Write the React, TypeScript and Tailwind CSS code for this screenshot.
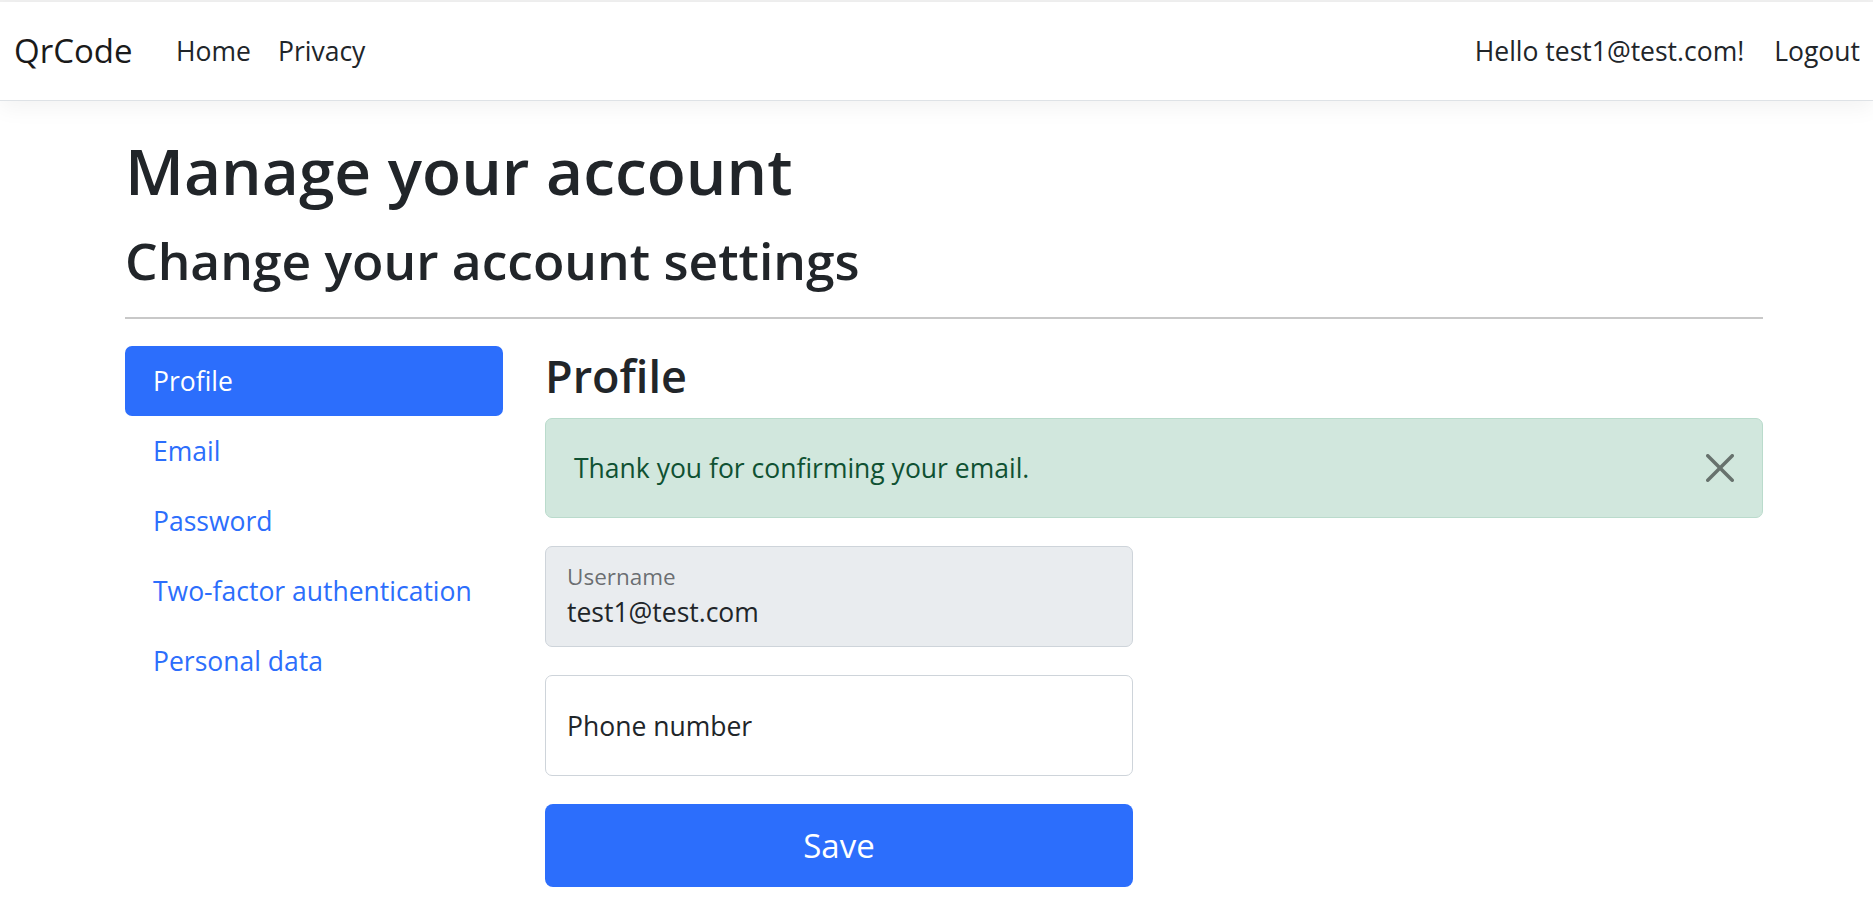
import React from "react";

function CloseIcon() {
  return (
    <svg viewBox="0 0 16 16" width="28" height="28" fill="#000" className="opacity-50">
      <path d="M.293.293a1 1 0 0 1 1.414 0L8 6.586 14.293.293a1 1 0 1 1 1.414 1.414L9.414 8l6.293 6.293a1 1 0 0 1-1.414 1.414L8 9.414l-6.293 6.293a1 1 0 0 1-1.414-1.414L6.586 8 .293 1.707a1 1 0 0 1 0-1.414z" />
    </svg>
  );
}

export default function App() {
  const links = ["Email", "Password", "Two-factor authentication", "Personal data"];
  return (
    <div className="min-h-[900px] bg-white text-[#212529] font-['Open_Sans',sans-serif]">
      <div className="h-[2px] bg-[#f0f0f0]" />
      <nav className="relative z-10 flex h-[99px] items-center border-b border-[#dee2e6] bg-white pl-[14px] pr-[13px] shadow-[0_7px_21px_rgba(0,0,0,0.05)]">
        <a className="w-[162px] whitespace-nowrap text-[33px] leading-[52px] text-[#1a1a1a]">QrCode</a>
        <a className="w-[102px] whitespace-nowrap text-[26.5px] leading-[42px]">Home</a>
        <a className="whitespace-nowrap text-[26.5px] leading-[42px]">Privacy</a>
        <div className="ml-auto flex items-center gap-[30px] whitespace-nowrap text-[26.5px] leading-[42px]">
          <a>Hello test1@test.com!</a>
          <a>Logout</a>
        </div>
      </nav>

      <main className="ml-[125px] w-[1638px] pt-[28px]">
        <h1 className="mb-[14px] whitespace-nowrap text-[64px] font-semibold leading-[84px]">Manage your account</h1>
        <h2 className="whitespace-nowrap text-[51.5px] font-semibold leading-[67px]">Change your account settings</h2>
        <div className="mt-[23px] h-[2px] bg-[#c8c8c8]" />
        <div className="mt-[27px] flex">
          <div className="flex w-[378px] flex-col">
            <a className="h-[70px] whitespace-nowrap rounded-[7px] bg-[#2c6efc] px-[28px] py-[14px] text-[26.5px] leading-[42px] text-white">
              Profile
            </a>
            {links.map((l) => (
              <a key={l} className="h-[70px] whitespace-nowrap px-[28px] py-[14px] text-[26.5px] leading-[42px] text-[#2c6efc]">
                {l}
              </a>
            ))}
          </div>
          <div className="ml-[42px] w-[1218px]">
            <h3 className="mb-[13px] whitespace-nowrap text-[45px] font-semibold leading-[59px]">Profile</h3>
            <div className="relative mb-[28px] h-[100px] rounded-[7px] border border-[#badbcc] bg-[#d1e7dd] px-[28px] py-[28px] text-[26.5px] leading-[42px] text-[#0f5132]">
              Thank you for confirming your email.
              <button className="absolute right-[28px] top-[35px] flex h-[28px] w-[28px] items-center justify-center">
                <CloseIcon />
              </button>
            </div>
            <div className="w-[588px]">
              <div className="mb-[28px] h-[101px] rounded-[7px] border border-[#ced4da] bg-[#e9ecef] px-[21px] pt-[14px]">
                <div className="text-[22.5px] leading-[32px] text-[#212529]/65">Username</div>
                <div className="text-[26.5px] leading-[38px]">test1@test.com</div>
              </div>
              <div className="mb-[28px] flex h-[101px] items-center rounded-[7px] border border-[#ced4da] bg-white px-[21px]">
                <span className="text-[26.5px] leading-[42px]">Phone number</span>
              </div>
              <button className="h-[83px] w-full rounded-[8px] bg-[#2c6efc] text-[33px] leading-[52px] text-white">
                Save
              </button>
            </div>
          </div>
        </div>
      </main>
    </div>
  );
}
